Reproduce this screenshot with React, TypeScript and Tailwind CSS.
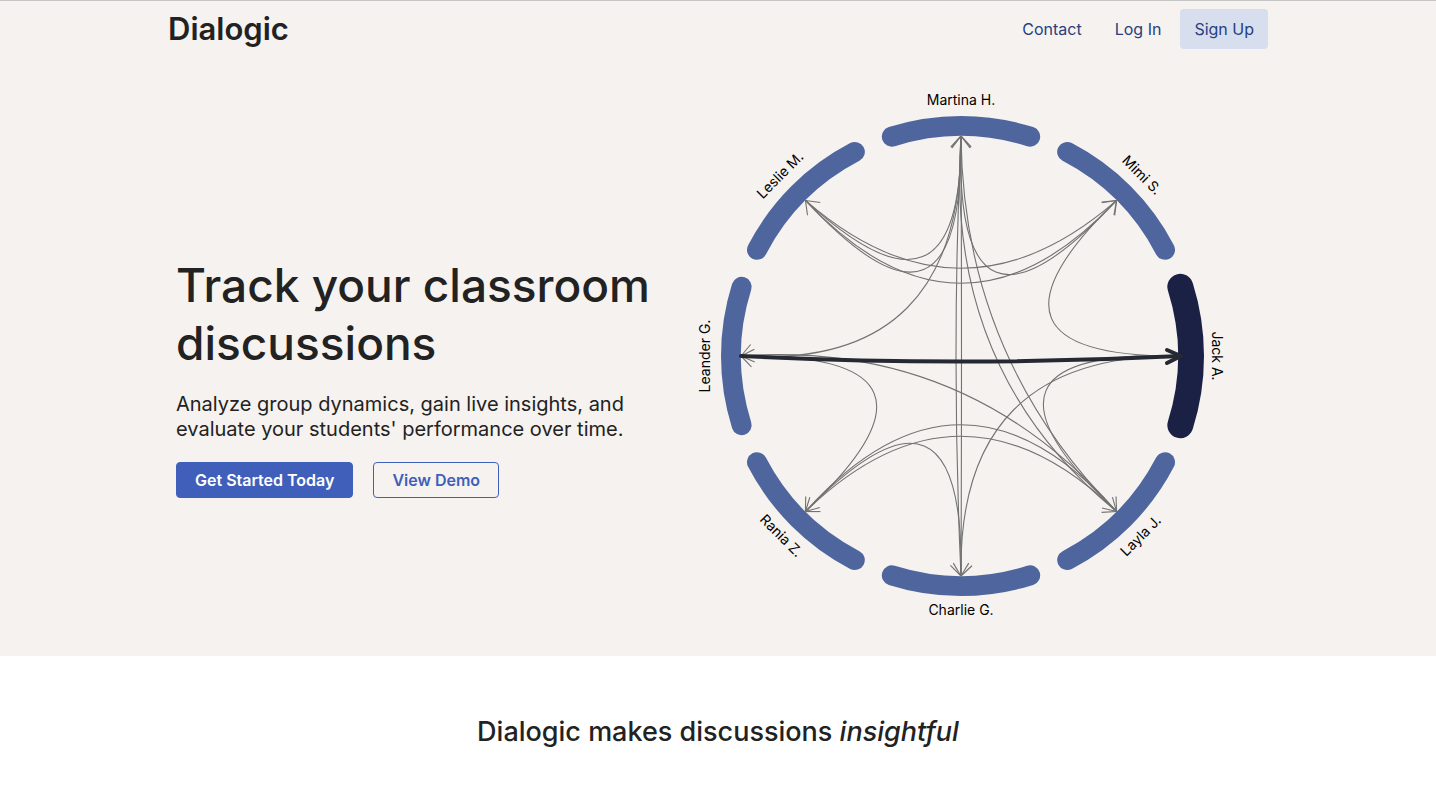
type Point = [number, number];

const NODE_RADIUS = 220;
const ARC_RADIUS = 230;
const LABEL_RADIUS = 255;
const ARC_HALF_ANGLE = 17.5;
const BARB_LENGTH = 15;

type Participant = {
  name: string;
  angle: number;
  labelRotation: number;
  selected?: boolean;
  barbs: number[];
};

// Angles are in degrees, clockwise from the positive x axis.
const participants: Participant[] = [
  { name: "Martina H.", angle: -90, labelRotation: 0, barbs: [47, 50, 53, 127, 130, 133] },
  { name: "Mimi S.", angle: -45, labelRotation: 45, barbs: [97, 100, 171, 174] },
  { name: "Jack A.", angle: 0, labelRotation: 90, selected: true, barbs: [] },
  { name: "Layla J.", angle: 45, labelRotation: -45, barbs: [-92, -106, -166, -183] },
  { name: "Charlie G.", angle: 90, labelRotation: 0, barbs: [-43, -59, -121, -135] },
  { name: "Rania Z.", angle: 135, labelRotation: 45, barbs: [0, -16, -73, -89] },
  { name: "Leander G.", angle: 180, labelRotation: -90, barbs: [-50, -27, 24, 46] },
  { name: "Leslie M.", angle: -135, labelRotation: -45, barbs: [8, 82] },
];

// [from, to, control x, control y]
const links: [number, number, number, number][] = [
  [0, 4, -10, 0],
  [0, 4, 1, 0],
  [7, 1, 0, -20],
  [7, 1, 0, 10],
  [0, 7, 1, -11],
  [0, 7, 3, 15],
  [0, 1, -8, 20],
  [0, 6, 2, 14],
  [1, 2, -7, 2],
  [2, 3, -18, -8],
  [2, 4, -4, -3],
  [4, 5, 4, -8],
  [6, 5, 14, -3],
  [3, 5, 0, -18],
  [3, 5, 0, 5],
  [6, 3, 6, -16],
  [0, 3, -17, 14],
  [0, 3, 2, 0],
];

function polar(radius: number, degrees: number): Point {
  const a = (degrees * Math.PI) / 180;
  return [radius * Math.cos(a), radius * Math.sin(a)];
}

function arcPath(angle: number) {
  const [x1, y1] = polar(ARC_RADIUS, angle - ARC_HALF_ANGLE);
  const [x2, y2] = polar(ARC_RADIUS, angle + ARC_HALF_ANGLE);
  return `M${x1} ${y1}A${ARC_RADIUS} ${ARC_RADIUS} 0 0 1 ${x2} ${y2}`;
}

function linkPath([from, to, cx, cy]: [number, number, number, number]) {
  const [x1, y1] = polar(NODE_RADIUS, participants[from].angle);
  const [x2, y2] = polar(NODE_RADIUS, participants[to].angle);
  return `M${x1} ${y1}Q${cx} ${cy} ${x2} ${y2}`;
}

function barbPath(angle: number, barb: number) {
  const [x, y] = polar(NODE_RADIUS, angle);
  const [dx, dy] = polar(BARB_LENGTH, barb);
  return `M${x} ${y}l${dx} ${dy}`;
}

function DiscussionGraph() {
  return (
    <svg
      viewBox="-300 -299 600 599"
      className="block w-full"
      role="img"
      aria-label="Discussion graph"
      fill="none"
    >
      {participants.map((p) => (
        <path
          key={p.name}
          d={arcPath(p.angle)}
          stroke={p.selected ? "#1a2145" : "#4f659d"}
          strokeWidth={p.selected ? 26 : 20}
          strokeLinecap="round"
        />
      ))}
      <g stroke="#727272" strokeWidth="1.1">
        {links.map((link, i) => (
          <path key={i} d={linkPath(link)} />
        ))}
        {participants.map((p) =>
          p.barbs.map((barb) => <path key={p.name + barb} d={barbPath(p.angle, barb)} />),
        )}
      </g>
      <g stroke="#262833" strokeWidth="4" strokeLinecap="round" strokeLinejoin="round">
        <path d="M-220 0Q0 11 220 0" />
        <path d="M206 -6L220 0L206 7" />
      </g>
      {participants.map((p) => {
        const [x, y] = polar(LABEL_RADIUS, p.angle);
        return (
          <text
            key={p.name}
            transform={`translate(${x} ${y}) rotate(${p.labelRotation})`}
            y="4"
            textAnchor="middle"
            className="fill-black text-sm"
          >
            {p.name}
          </text>
        );
      })}
    </svg>
  );
}

function Header() {
  return (
    <header className="border-t border-[#c4c4c4]">
      <div className="mx-auto flex max-w-[1100px] items-center justify-between py-2">
        <a href="#" className="text-[31px] leading-9 font-semibold text-[#222222]">
          Dialogic
        </a>
        <nav className="flex items-center gap-[5px] text-base text-[#27407f]">
          <a href="#contact" className="px-[14px] py-2">
            Contact
          </a>
          <a href="#login" className="px-[14px] py-2">
            Log In
          </a>
          <a href="#signup" className="rounded bg-[#d7deed] px-[14px] py-2">
            Sign Up
          </a>
        </nav>
      </div>
    </header>
  );
}

function Hero() {
  return (
    <section className="mx-auto grid max-w-[1100px] grid-cols-[minmax(0,1fr)_600px] items-center pr-[7px] pl-2">
      <div className="pt-10">
        <h1 className="text-[46px] leading-[58px] font-medium text-[#222222]">
          Track your classroom
          <br />
          discussions
        </h1>
        <p className="mt-5 text-xl leading-[25px] text-[#222222]">
          Analyze group dynamics, gain live insights, and
          <br />
          evaluate your students' performance over time.
        </p>
        <div className="mt-5 flex gap-5">
          <button
            type="button"
            className="h-9 rounded border border-[#3f5fbb] bg-[#3f5fbb] px-[18px] text-base font-semibold text-white"
          >
            Get Started Today
          </button>
          <button
            type="button"
            className="h-9 rounded border border-[#3f5fbb] px-[18px] text-base font-semibold text-[#3f5fbb]"
          >
            View Demo
          </button>
        </div>
      </div>
      <DiscussionGraph />
    </section>
  );
}

export default function App() {
  return (
    <div className="min-h-screen bg-white font-[Inter,sans-serif]">
      <div className="bg-[#f5f2ef]">
        <Header />
        <Hero />
      </div>
      <section className="px-4 pt-[58px] pb-9 text-center">
        <h2 className="text-[27px] leading-9 font-medium text-[#222222]">
          Dialogic makes discussions <em>insightful</em>
        </h2>
      </section>
    </div>
  );
}
